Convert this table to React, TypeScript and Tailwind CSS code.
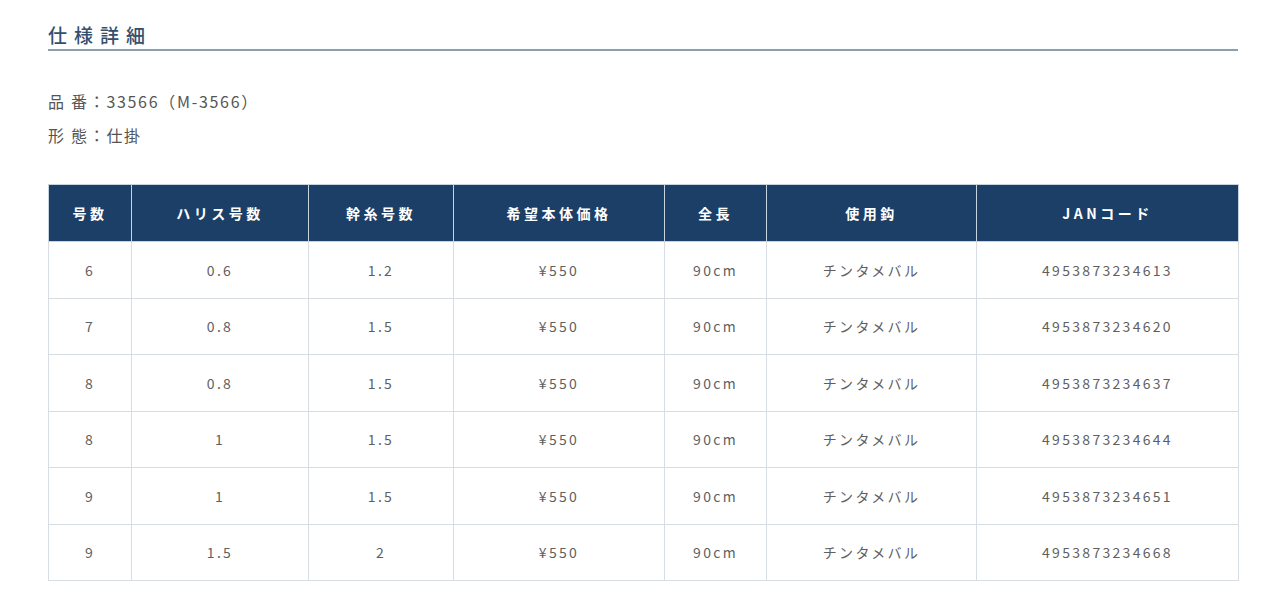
import React from "react";

const COLS = [
  { label: "号数", w: 83 },
  { label: "ハリス号数", w: 177 },
  { label: "幹糸号数", w: 145 },
  { label: "希望本体価格", w: 211 },
  { label: "全長", w: 102 },
  { label: "使用鈎", w: 210 },
  { label: "JANコード", w: 262 },
];

const ROWS: string[][] = [
  ["6", "0.6", "1.2", "¥550", "90cm", "チンタメバル", "4953873234613"],
  ["7", "0.8", "1.5", "¥550", "90cm", "チンタメバル", "4953873234620"],
  ["8", "0.8", "1.5", "¥550", "90cm", "チンタメバル", "4953873234637"],
  ["8", "1", "1.5", "¥550", "90cm", "チンタメバル", "4953873234644"],
  ["9", "1", "1.5", "¥550", "90cm", "チンタメバル", "4953873234651"],
  ["9", "1.5", "2", "¥550", "90cm", "チンタメバル", "4953873234668"],
];

const FONT = "font-['Noto_Sans_CJK_JP','Noto_Sans',sans-serif]";

export default function App() {
  return (
    <div className={`w-[1280px] h-[610px] bg-white ${FONT} overflow-hidden`}>
      <div className="pl-[48px] pr-[42px] pt-[22px]">
        <h2 className="text-[19px] leading-[26px] tracking-[7px] font-medium text-[#34506e] pb-[1px] border-b-2 border-[#8d9eae]">
          仕様詳細
        </h2>

        <div className="mt-[33px] text-[16px] text-[#555] tracking-[1.7px] leading-[34px]">
          <div>品 番：33566（M-3566）</div>
          <div>形 態：仕掛</div>
        </div>

        <table className="mt-[32px] border-collapse table-fixed w-[1190px] border border-[#d3d9e0]">
          <colgroup>
            {COLS.map((c) => (
              <col key={c.label} style={{ width: c.w }} />
            ))}
          </colgroup>
          <thead>
            <tr className="h-[57px] bg-[#1b3f67]">
              {COLS.map((c) => (
                <th
                  key={c.label}
                  className="border border-[#c9d3de] text-white text-[14px] font-bold tracking-[3.5px] text-center align-middle p-0"
                >
                  {c.label}
                </th>
              ))}
            </tr>
          </thead>
          <tbody>
            {ROWS.map((r, i) => (
              <tr key={i} className={i % 2 === 0 ? "h-[57px]" : "h-[56px]"}>
                {r.map((v, j) => (
                  <td
                    key={j}
                    className="border border-[#d8dde4] text-[#5f5f5f] text-[14px] tracking-[2.3px] text-center align-middle p-0"
                  >
                    {v}
                  </td>
                ))}
              </tr>
            ))}
          </tbody>
        </table>
      </div>
    </div>
  );
}
